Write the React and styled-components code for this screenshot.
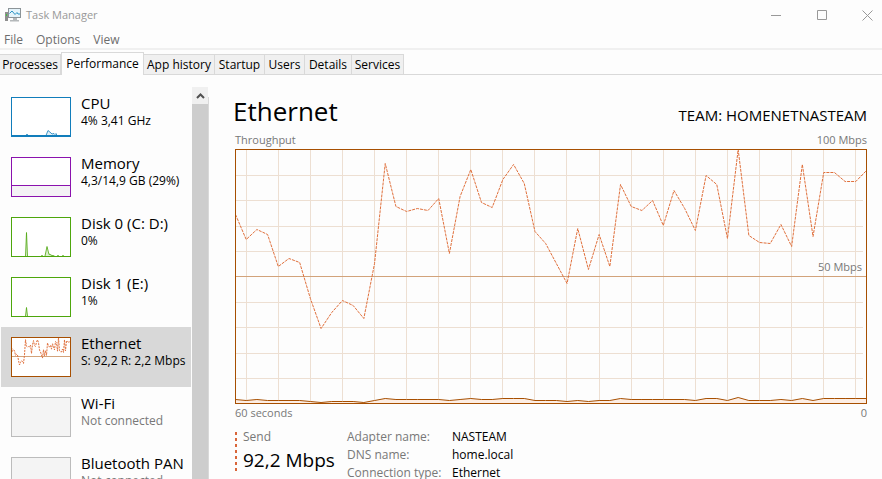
import React, { useState } from "react";
import styled, { createGlobalStyle } from "styled-components";

const GlobalStyle = createGlobalStyle`
  * {
    box-sizing: border-box;
  }
  body {
    margin: 0;
    overflow: hidden;
    background-color: #fdfdfd;
    color: #000;
    font-family: "Open Sans", "Noto Sans", sans-serif;
    font-size: 12px;
    line-height: 18px;
  }
  button {
    margin: 0;
    padding: 0;
    border: none;
    background: none;
    color: inherit;
    font: inherit;
    text-align: left;
    white-space: nowrap;
  }
`;
const Window = styled.div`
  display: flex;
  flex-direction: column;
  height: 100vh;
  overflow: hidden;
`;
const TitleBar = styled.header`
  display: flex;
  align-items: center;
  height: 30px;
  padding-left: 5px;
  color: #999;
`;
const AppTitle = styled.h1`
  flex: 1;
  margin: 0 0 0 5px;
  font-size: 11px;
  font-weight: normal;
`;
const WindowButton = styled.button`
  display: flex;
  align-items: center;
  justify-content: center;
  width: 46px;
  height: 28px;
  &:last-child {
    width: 37px;
    padding-left: 17px;
    justify-content: flex-start;
  }
`;
const MenuBar = styled.nav`
  display: flex;
  gap: 13px;
  height: 20px;
  padding: 1px 4px;
  border-bottom: 2px solid #f0f0f0;
  color: #6d6d6d;
`;
const TabList = styled.div`
  display: flex;
  align-items: flex-end;
  height: 25px;
  padding-top: 2px;
  box-shadow: inset 0 -1px #d9d9d9;
`;
const Tab = styled.button`
  width: ${({ $width }) => $width}px;
  height: ${({ $active }) => ($active ? 23 : 21)}px;
  border: 1px solid #d9d9d9;
  border-left-width: ${({ $active }) => ($active ? 1 : 0)}px;
  border-bottom-width: ${({ $active }) => ($active ? 0 : 1)}px;
  background-color: ${({ $active }) => ($active ? "#fdfdfd" : "#f0f0f0")};
  text-align: center;
`;
const Body = styled.div`
  display: flex;
  flex: 1;
  min-height: 0;
`;
const Sidebar = styled.nav`
  width: 190px;
  margin: 12px 1px 0 1px;
  overflow: hidden;
`;
const DeviceButton = styled.button`
  display: flex;
  gap: 10px;
  width: 100%;
  height: 60px;
  padding: 10px;
  background-color: ${({ $active }) => ($active ? "#d8d8d8" : "transparent")};
`;
const Thumb = styled.svg`
  flex: none;
  display: block;
  width: 60px;
  height: 40px;
`;
const DeviceText = styled.span`
  display: flex;
  flex-direction: column;
  margin-top: -4px;
`;
const DeviceName = styled.span`
  font-size: 15px;
  line-height: 20px;
`;
const DeviceInfo = styled.span`
  line-height: 16px;
  white-space: pre;
  color: ${({ $off }) => ($off ? "#787878" : "#000")};
`;
const ScrollBar = styled.div`
  display: flex;
  flex-direction: column;
  width: 16px;
  margin-top: 12px;
  background-color: #cdcdcd;
`;
const ScrollUp = styled.button`
  display: flex;
  align-items: center;
  justify-content: center;
  height: 17px;
  background-color: #f0f0f0;
`;
const Divider = styled.div`
  width: 1px;
  margin-top: 22px;
  background-color: #d9d9d9;
`;
const Main = styled.main`
  flex: 1;
  min-width: 0;
  padding: 16px 15px 0 26px;
`;
const Heading = styled.div`
  display: flex;
  align-items: baseline;
  justify-content: space-between;
  height: 40px;
`;
const DeviceTitle = styled.h2`
  margin: 0 0 0 -2px;
  font-size: 26px;
  line-height: 40px;
  font-weight: normal;
`;
const AdapterTitle = styled.span`
  font-size: 15px;
`;
const ChartLabels = styled.div`
  display: flex;
  justify-content: space-between;
  font-size: 11px;
  color: #787878;
`;
const ChartArea = styled.div`
  position: relative;
`;
const Chart = styled.svg`
  display: block;
  width: 100%;
  height: 255px;
`;
const MidLabel = styled.span`
  position: absolute;
  right: 5px;
  top: 109px;
  font-size: 11px;
  color: #787878;
`;
const Stats = styled.div`
  display: flex;
  margin-top: 6px;
`;
const SendStat = styled.div`
  width: 112px;
  height: 40px;
  padding-left: 8px;
`;
const SendMarker = styled.svg`
  flex: none;
  width: 2px;
  height: 40px;
  margin-right: -2px;
  margin-top: 4px;
`;
const StatLabel = styled.div`
  color: #787878;
`;
const StatValue = styled.div`
  font-size: 19px;
  line-height: 28px;
  white-space: nowrap;
`;
const Details = styled.dl`
  display: grid;
  grid-template-columns: 105px auto;
  margin: 0;
`;
const DetailName = styled.dt`
  color: #787878;
`;
const DetailValue = styled.dd`
  margin: 0;
`;

const tabs = [
  { name: "Processes", width: 61 },
  { name: "Performance", width: 83 },
  { name: "App history", width: 71 },
  { name: "Startup", width: 50 },
  { name: "Users", width: 40 },
  { name: "Details", width: 47 },
  { name: "Services", width: 52 },
];

const devices = [
  { name: "CPU", info: "4% 3,41 GHz", color: "#117dbb" },
  { name: "Memory", info: "4,3/14,9 GB (29%)", color: "#8b12ae" },
  { name: "Disk 0 (C: D:)", info: "0%", color: "#4da60c" },
  { name: "Disk 1 (E:)", info: "1%", color: "#4da60c" },
  { name: "Ethernet", info: "S: 92,2 R: 2,2 Mbps", color: "#a74f01" },
  { name: "Wi-Fi", info: "Not connected", color: "#bcbcbc", off: true },
  { name: "Bluetooth PAN", info: "Not connected", color: "#bcbcbc", off: true },
];

const details = [
  ["Adapter name:", "NASTEAM"],
  ["DNS name:", "home.local"],
  ["Connection type:", "Ethernet"],
];

// one sample per second, measured down from the top of the chart
const sent = [
  65, 90, 80, 85, 117, 109, 113, 149, 179, 163, 151, 156, 169, 114, 14, 57, 62,
  59, 61, 49, 104, 47, 20, 53, 58, 30, 15, 34, 82, 94, 114, 134, 79, 120, 85,
  117, 35, 57, 61, 51, 76, 41, 59, 81, 26, 35, 89, 0, 86, 93, 94, 75, 97, 15,
  87, 23, 23, 32, 32, 21,
];
const received = [
  250, 251, 250, 251, 251, 251, 251, 252, 253, 252, 252, 252, 253, 251, 249,
  250, 250, 250, 250, 250, 251, 250, 249, 250, 250, 249, 249, 249, 251, 251,
  251, 252, 251, 252, 251, 251, 249, 250, 250, 250, 250, 250, 250, 251, 249,
  249, 251, 248, 251, 251, 251, 250, 251, 249, 251, 249, 249, 249, 249, 249,
];

const toPoints = (values, width, scale) =>
  values
    .map((v, i) => `${0.5 + (i * width) / (values.length - 1)},${0.5 + v * scale}`)
    .join(" ");

const gridRows = [26, 51, 77, 102, 153, 178, 204, 229];
const gridColumns = Array.from({ length: 20 }, (_, i) =>
  Math.floor(((1 + i * 3) * 631) / 59 + 0.4)
);

const AppIcon = () => (
  <svg width="16" height="14" viewBox="0 0 16 14">
    <rect x="0" y="4" width="3" height="9" fill="#8f8f8f" />
    <rect x="1" y="6" width="1" height="2" fill="#3fc43f" />
    <rect x="3.5" y="0.5" width="12" height="9" fill="#e4f3fa" stroke="#8c9498" />
    <path d="M4.5 5.5L7 3l3 3.5 2-2 1 1.5h2" fill="none" stroke="#2b93c4" />
    <path d="M8 10h4v2h2v1.5H5V12h3z" fill="#b4b8ba" />
  </svg>
);

const ThumbGraph = ({ name, color, off }) => (
  <Thumb viewBox="0 0 60 40">
    <rect x="0.5" y="0.5" width="59" height="39" fill={off ? "#f4f4f4" : "#fff"} />
    {name === "CPU" && (
      <g stroke={color} fill="#e3f0f7">
        <path
          d="M1 38.5h14l1-1.5 1 1.500h18l2-5 3 2.500 1 1 2-.5 1 1 1-1 1 2h13"
          strokeWidth="0.8"
        />
        <path d="M1 38.5h58" />
      </g>
    )}
    {name === "Memory" && (
      <path d="M0 28.5h60V39.5H0z" fill="#f4f2f5" stroke={color} />
    )}
    {name === "Disk 0 (C: D:)" && (
      <path
        d="M14.5 39l1-23.500 1 23.500M30 39l1-.5 1 .5M34 39l2-9.500 2 8 1-.5 1 1.500 1-.5 1 1 1-.5 1 1M46 39l1-.5 1 .5M51 39l1-.5 1 .5"
        stroke={color}
        fill="#dcefcf"
        strokeWidth="0.8"
      />
    )}
    {name === "Disk 1 (E:)" && (
      <path d="M14.5 39l1-8.500 1 8.500" stroke={color} fill="#dcefcf" strokeWidth="0.8" />
    )}
    {name === "Ethernet" && (
      <>
        <path d="M0 19.5h60" stroke="#d2a37b" />
        <polyline
          points={toPoints(sent, 59, 39 / 254)}
          fill="none"
          stroke="#e0703c"
          strokeDasharray="2 1"
        />
      </>
    )}
    <rect x="0.5" y="0.5" width="59" height="39" fill="none" stroke={color} />
  </Thumb>
);

const ThroughputChart = () => (
  <Chart viewBox="0 0 632 255" preserveAspectRatio="none">
    <g stroke="#eddfd2">
      {gridRows.map((y) => (
        <path key={y} d={`M0 ${y + 0.5}H628`} />
      ))}
      {gridColumns.map((x) => (
        <path key={x} d={`M${x + 0.5} 0V255`} />
      ))}
    </g>
    <path d="M0 127.5H632" stroke="#d2a37b" />
    <polygon
      points={`0.5,254.5 ${toPoints(received, 631, 1)} 631.5,254.5`}
      fill="#fdeee4"
    />
    <polyline points={toPoints(received, 631, 1)} fill="none" stroke="#a74f01" />
    <polyline
      points={toPoints(sent, 631, 1)}
      fill="none"
      stroke="#e0703c"
      strokeDasharray="3 1"
    />
    <rect x="0.5" y="0.5" width="631" height="254" fill="none" stroke="#a74f01" />
  </Chart>
);

const App = () => {
  const [tab, setTab] = useState("Performance");
  const [device, setDevice] = useState("Ethernet");

  return (
    <Window>
      <GlobalStyle />
      <TitleBar>
        <AppIcon />
        <AppTitle>Task Manager</AppTitle>
        <WindowButton aria-label="Minimize">
          <svg width="10" height="11" stroke="#999">
            <path d="M0 5.5h10" />
          </svg>
        </WindowButton>
        <WindowButton aria-label="Maximize">
          <svg width="10" height="10" fill="none" stroke="#999">
            <path d="M.5.5h9v9h-9z" />
          </svg>
        </WindowButton>
        <WindowButton aria-label="Close">
          <svg width="11" height="11" stroke="#999">
            <path d="M.5.5l10 10M10.5.5l-10 10" />
          </svg>
        </WindowButton>
      </TitleBar>
      <MenuBar>
        <button>File</button>
        <button>Options</button>
        <button>View</button>
      </MenuBar>
      <TabList role="tablist">
        {tabs.map(({ name, width }) => (
          <Tab
            key={name}
            role="tab"
            aria-selected={name === tab}
            $active={name === tab}
            $width={width}
            onClick={() => setTab(name)}
          >
            {name}
          </Tab>
        ))}
      </TabList>
      <Body>
        <Sidebar>
          {devices.map((item) => (
            <DeviceButton
              key={item.name}
              $active={item.name === device}
              onClick={() => setDevice(item.name)}
            >
              <ThumbGraph {...item} />
              <DeviceText>
                <DeviceName>{item.name}</DeviceName>
                <DeviceInfo $off={item.off}>{item.info}</DeviceInfo>
              </DeviceText>
            </DeviceButton>
          ))}
        </Sidebar>
        <ScrollBar>
          <ScrollUp aria-label="Scroll up">
            <svg width="9" height="6" fill="none" stroke="#505050" strokeWidth="2">
              <path d="M1 5l3.5-3.5L8 5" />
            </svg>
          </ScrollUp>
        </ScrollBar>
        <Divider />
        <Main>
          <Heading>
            <DeviceTitle>Ethernet</DeviceTitle>
            <AdapterTitle>TEAM: HOMENETNASTEAM</AdapterTitle>
          </Heading>
          <ChartLabels>
            <span>Throughput</span>
            <span>100 Mbps</span>
          </ChartLabels>
          <ChartArea>
            <ThroughputChart />
            <MidLabel>50 Mbps</MidLabel>
          </ChartArea>
          <ChartLabels>
            <span>60 seconds</span>
            <span>0</span>
          </ChartLabels>
          <Stats>
            <SendMarker viewBox="0 0 2 40">
              <path d="M1 0v40" stroke="#d9663a" strokeWidth="2" strokeDasharray="3 3" />
            </SendMarker>
            <SendStat>
              <StatLabel>Send</StatLabel>
              <StatValue>92,2 Mbps</StatValue>
            </SendStat>
            <Details>
              {details.map(([name, value]) => (
                <React.Fragment key={name}>
                  <DetailName>{name}</DetailName>
                  <DetailValue>{value}</DetailValue>
                </React.Fragment>
              ))}
            </Details>
          </Stats>
        </Main>
      </Body>
    </Window>
  );
};

export default App;
